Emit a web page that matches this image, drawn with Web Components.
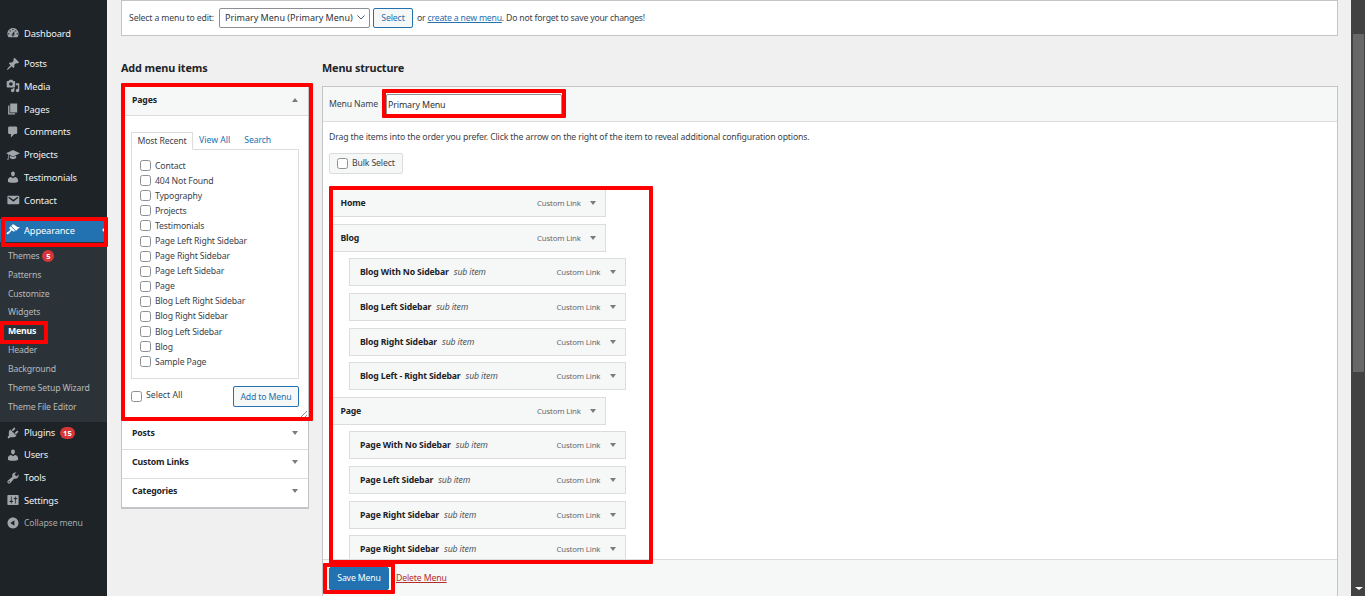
<!DOCTYPE html>
<html>
<head>
<meta charset="utf-8">
<title>Menus</title>
<style>
    html, body { margin: 0; padding: 0; height: 596px; overflow: hidden; background: #f0f0f0; }
    body { font-family: "Noto Sans", "Liberation Sans", sans-serif; font-size: 8.7px; letter-spacing: -0.14px; color: #3c434a; }
</style>
</head>
<body>
<wp-page></wp-page>

<script>
const ICONS = {
    dashboard: 'M3.76 16h12.48c1.1-1.37 1.76-3.11 1.76-5 0-4.42-3.58-8-8-8s-8 3.58-8 8c0 1.89.66 3.63 1.76 5zM10 4c.55 0 1 .45 1 1s-.45 1-1 1-1-.45-1-1 .45-1 1-1zM6 6c.55 0 1 .45 1 1s-.45 1-1 1-1-.45-1-1 .45-1 1-1zm8 0c.55 0 1 .45 1 1s-.45 1-1 1-1-.45-1-1 .45-1 1-1zm-5.37 5.55L12 7v6c0 1.1-.9 2-2 2s-2-.9-2-2c0-.57.24-1.08.63-1.45zM4 10c.55 0 1 .45 1 1s-.45 1-1 1-1-.45-1-1 .45-1 1-1zm12 0c.55 0 1 .45 1 1s-.45 1-1 1-1-.45-1-1 .45-1 1-1zm-5 3c0-.55-.45-1-1-1s-1 .45-1 1 .45 1 1 1 1-.45 1-1z',
    pin: 'M10.44 3.02l1.82-1.82 6.36 6.35-1.83 1.82c-1.05-.68-2.48-.57-3.41.36l-.75.75c-.92.93-1.04 2.35-.35 3.41l-1.83 1.82-2.41-2.41-2.8 2.79c-.42.42-3.38 2.71-3.8 2.29s1.86-3.39 2.28-3.81l2.79-2.79L4.1 9.36l1.83-1.82c1.05.69 2.48.57 3.4-.36l.75-.75c.93-.92 1.05-2.35.36-3.41z',
    media: 'M13 11V4c0-.55-.45-1-1-1h-1.67L9 1H5L3.67 3H2c-.55 0-1 .45-1 1v7c0 .55.45 1 1 1h10c.55 0 1-.45 1-1zM7 4.5c1.38 0 2.5 1.12 2.5 2.5S8.38 9.5 7 9.5 4.5 8.38 4.5 7 5.62 4.5 7 4.5zM14 6h5v10.5c0 1.38-1.12 2.5-2.5 2.5S14 17.88 14 16.5s1.12-2.5 2.5-2.5c.17 0 .34.02.5.05V9h-3V6zm-4 8.05V13h2v3.5c0 1.38-1.12 2.5-2.5 2.5S7 17.88 7 16.5 8.12 14 9.5 14c.17 0 .34.02.5.05z',
    page: 'M6 15V2h10v13H6zm-1 1h8v2H3V5h2v11z',
    comments: 'M5 2h9c1.1 0 2 .9 2 2v7c0 1.1-.9 2-2 2h-2l-5 5v-5H5c-1.1 0-2-.9-2-2V4c0-1.1.9-2 2-2z',
    learn: 'M10 3L0 7.5l3 1.4v3.6l-1.2 4.7h1.6l.6-4.4V9.4L10 12l10-4.5L10 3zM5.5 10.9v3.4c1.2 1 2.8 1.6 4.5 1.6s3.3-.6 4.5-1.6v-3.4L10 13l-4.5-2.1z',
    users: 'M10 9.25c-2.27 0-2.73-3.44-2.73-3.44C7 4.02 7.82 2 9.97 2c2.16 0 2.98 2.02 2.71 3.81 0 0-.41 3.44-2.68 3.44zm0 2.57L12.72 10c2.39 0 4.52 2.33 4.52 4.53v2.49s-3.65 1.13-7.24 1.13c-3.65 0-7.24-1.13-7.24-1.13v-2.49c0-2.25 1.94-4.48 4.47-4.48z',
    email: 'M3.87 4h13.25C18.37 4 19 4.59 19 5.79v8.42c0 1.19-.63 1.79-1.88 1.79H3.87c-1.25 0-1.88-.6-1.88-1.79V5.79c0-1.2.63-1.79 1.88-1.79zm6.62 8.6l6.74-5.53c.24-.2.43-.66.13-1.07-.29-.41-.82-.42-1.17-.17l-5.7 3.86L4.8 5.83c-.35-.25-.88-.24-1.17.17-.3.41-.11.87.13 1.07z',
    appearance: 'M14.48 11.06L7.41 3.99l1.5-1.5c.5-.56 2.3-.47 3.51.32 1.21.8 1.43 1.28 2.91 2.1 1.18.64 2.45 1.26 4.45.85zm-.71.71L6.7 4.7 4.93 6.47c-.39.39-.39 1.02 0 1.41l1.06 1.06c.39.39.39 1.03 0 1.42-.6.6-1.43 1.11-2.21 1.69-.35.26-.7.53-1.01.84C1.43 13.23.4 14.91 1.2 15.7c.79.8 2.47-.23 3.83-1.59.31-.31.58-.65.84-1 .58-.78 1.09-1.61 1.69-2.21.39-.39 1.02-.39 1.41 0l1.06 1.06c.39.39 1.02.39 1.41 0z',
    plugins: 'M13.11 4.36L9.87 7.6 8 5.73l3.24-3.24c.35-.34 1.05-.2 1.56.32.52.51.66 1.21.31 1.55zm-8 1.77l.91-1.12 9.01 9.01-1.19.84c-.71.71-2.63 1.16-3.82 1.16H6.14L4.9 17.26c-.59.59-1.54.59-2.12 0-.59-.58-.59-1.53 0-2.12l1.24-1.24v-3.88c0-1.13.4-3.19 1.09-3.89zm7.26 3.97l3.24-3.24c.34-.35 1.04-.21 1.55.31.52.51.66 1.21.31 1.55l-3.24 3.25z',
    tools: 'M16.68 9.77c-1.34 1.34-3.3 1.67-4.95.99l-5.41 6.52c-.99.99-2.59.99-3.58 0s-.99-2.59 0-3.57l6.52-5.42c-.68-1.65-.35-3.61.99-4.95 1.28-1.28 3.12-1.62 4.72-1.06l-2.89 2.89 2.82 2.82 2.86-2.87c.53 1.58.18 3.39-1.08 4.67zM3.81 16.21c.4.39 1.04.39 1.43 0 .4-.4.4-1.04 0-1.43-.39-.4-1.03-.4-1.43 0-.39.39-.39 1.03 0 1.43z',
    settings: 'M18 16V4c0-.55-.45-1-1-1H3c-.55 0-1 .45-1 1v12c0 .55.45 1 1 1h14c.55 0 1-.45 1-1zM8 11h1c.55 0 1 .45 1 1s-.45 1-1 1H8v1.5c0 .28-.22.5-.5.5s-.5-.22-.5-.5V13H6c-.55 0-1-.45-1-1s.45-1 1-1h1V5.5c0-.28.22-.5.5-.5s.5.22.5.5V11zm5-2h-1c-.55 0-1-.45-1-1s.45-1 1-1h1V5.5c0-.28.22-.5.5-.5s.5.22.5.5V7h1c.55 0 1 .45 1 1s-.45 1-1 1h-1v5.5c0 .28-.22.5-.5.5s-.5-.22-.5-.5V9z',
    collapse: 'M10 2.16c4.33 0 7.84 3.51 7.84 7.84s-3.51 7.84-7.84 7.84S2.16 14.33 2.16 10 5.71 2.16 10 2.16zm2 11.72V6.12L6.18 9.97z'
};

class WpPage extends HTMLElement {
    constructor() {
        super();
        this.attachShadow({ mode: 'open' });
    }
    connectedCallback() {
        this.shadowRoot.innerHTML = `
            <style>
                :host { display: flex; position: relative; width: 1365px; height: 596px; overflow: hidden; }
                .main { flex: 1; min-width: 0; padding: 0 13px 0 14px; display: flex; flex-direction: column; }
                .cols { display: grid; grid-template-columns: 188px 1016px; gap: 13px; padding-top: 25px; flex: 1; min-height: 0; }
                .col { display: flex; flex-direction: column; min-height: 0; }
                h2 { margin: 0; font-size: 10.85px; line-height: 14px; font-weight: 700; color: #1d2327; height: 25px; }
                h2.right { height: 26px; }
            </style>
            <wp-sidebar></wp-sidebar>
            <div class="main">
                <select-bar></select-bar>
                <div class="cols">
                    <div class="col">
                        <h2>Add menu items</h2>
                        <items-panel></items-panel>
                    </div>
                    <div class="col">
                        <h2 class="right">Menu structure</h2>
                        <structure-panel></structure-panel>
                    </div>
                </div>
            </div>
            <fake-scrollbar></fake-scrollbar>
            <red-mark x="1" y="217" w="107" h="30"></red-mark>
            <red-mark x="0" y="321" w="48" h="23"></red-mark>
            <red-mark x="121" y="83" w="192" h="338"></red-mark>
            <red-mark x="382" y="89" w="184" h="29"></red-mark>
            <red-mark x="329" y="186" w="324" h="378"></red-mark>
            <red-mark x="323" y="563" w="72" h="31"></red-mark>
        `;
    }
}

class RedMark extends HTMLElement {
    constructor() {
        super();
        this.attachShadow({ mode: 'open' });
    }
    connectedCallback() {
        const a = (n) => this.getAttribute(n);
        this.shadowRoot.innerHTML = `
            <style>
                :host {
                    position: absolute; box-sizing: border-box; pointer-events: none;
                    left: ${a('x')}px; top: ${a('y')}px; width: ${a('w')}px; height: ${a('h')}px;
                    border: 4px solid #f00; border-radius: 1px;
                }
            </style>
        `;
    }
}

class FakeScrollbar extends HTMLElement {
    constructor() {
        super();
        this.attachShadow({ mode: 'open' });
    }
    connectedCallback() {
        this.shadowRoot.innerHTML = `
            <style>
                :host { display: flex; flex-direction: column; flex: none; width: 14px; height: 596px; background: #424242; box-sizing: border-box; padding: 34px 1px 0 2px; }
                .thumb { height: 338px; background: #686868; }
                .arrow { margin: auto 0 6px 2px; width: 0; height: 0; border-left: 4px solid transparent; border-right: 4px solid transparent; border-top: 3px solid #fff; }
            </style>
            <div class="thumb"></div>
            <div class="arrow"></div>
        `;
    }
}

class WpSidebar extends HTMLElement {
    constructor() {
        super();
        this.attachShadow({ mode: 'open' });
    }
    item(icon, label, extra = '', cls = '') {
        return `<a class="item ${icon === 'appearance' ? 'current' : ''} ${cls}">
            <svg viewBox="0 0 20 20" width="14" height="14"><path d="${ICONS[icon]}"/></svg>
            <span>${label}</span>${extra}
        </a>`;
    }
    connectedCallback() {
        const subs = ['Patterns', 'Customize', 'Widgets', 'Menus', 'Header', 'Background', 'Theme Setup Wizard', 'Theme File Editor'];
        this.shadowRoot.innerHTML = `
            <style>
                :host { display: flex; flex-direction: column; flex: none; width: 107px; height: 596px; box-sizing: border-box; padding-top: 22px; background: #1d2327; font-size: 9.3px; color: #f0f0f1; }
                .item { display: flex; align-items: center; flex: none; height: 22.75px; padding-left: 6px; gap: 4px; position: relative; }
                .item svg { fill: #a0a5aa; flex: none; }
                .sep { height: 7.4px; flex: none; }
                .current { background: #2271b1; color: #fff; }
                .current svg { fill: #fff; }
                .current::after { content: ''; position: absolute; right: 0; top: 6px; border: 5px solid transparent; border-right-color: #f0f0f1; border-left: 0; }
                .sub { background: #2c3338; padding: 5px 0 5.4px; color: #b4b9be; font-size: 8.7px; }
                .sub div { display: flex; align-items: center; gap: 3px; height: 18.85px; padding-left: 8px; }
                .sub .on { color: #fff; font-weight: 700; }
                .badge { display: inline-flex; align-items: center; justify-content: center; min-width: 12px; height: 12px; padding: 0 3px; box-sizing: border-box; border-radius: 6px; background: #d63638; color: #fff; font-size: 7.5px; font-weight: 700; letter-spacing: 0; }
                .plugins { height: 22px; }
                .plugins .badge { margin-left: 1px; }
                .collapse { color: #a7aaad; font-size: 8.7px; margin-top: -0.5px; }
            </style>
            ${this.item('dashboard', 'Dashboard')}
            <div class="sep"></div>
            ${this.item('pin', 'Posts')}
            ${this.item('media', 'Media')}
            ${this.item('page', 'Pages')}
            ${this.item('comments', 'Comments')}
            ${this.item('learn', 'Projects')}
            ${this.item('users', 'Testimonials')}
            ${this.item('email', 'Contact')}
            <div class="sep"></div>
            ${this.item('appearance', 'Appearance')}
            <div class="sub">
                <div>Themes <span class="badge">5</span></div>
                ${subs.map((s) => `<div class="${s === 'Menus' ? 'on' : ''}">${s}</div>`).join('')}
            </div>
            ${this.item('plugins', 'Plugins', '<span class="badge">15</span>', 'plugins')}
            ${this.item('users', 'Users')}
            ${this.item('tools', 'Tools')}
            ${this.item('settings', 'Settings')}
            <a class="item collapse">
                <svg viewBox="0 0 20 20" width="14" height="14"><path d="${ICONS.collapse}"/></svg>
                <span>Collapse menu</span>
            </a>
        `;
    }
}

class SelectBar extends HTMLElement {
    constructor() {
        super();
        this.attachShadow({ mode: 'open' });
    }
    connectedCallback() {
        this.shadowRoot.innerHTML = `
            <style>
                :host { display: flex; align-items: center; flex: none; box-sizing: border-box; width: 1217px; height: 36px; padding: 0 7px 1px; background: #fff; border: 1px solid #c3c4c7; white-space: nowrap; }
                .label { width: 90px; }
                .select { box-sizing: border-box; display: flex; align-items: center; justify-content: space-between; width: 151px; height: 20px; padding: 0 4px 0 5px; background: #fff; border: 1px solid #8c8f94; border-radius: 2px; color: #2c3338; font-size: 9px; letter-spacing: 0; }
                .btn { box-sizing: border-box; display: flex; align-items: center; justify-content: center; width: 40px; height: 20px; margin: 0 4px 0 3px; color: #2271b1; background: #f6f7f7; border: 1px solid #2271b1; border-radius: 2px; }
                .note { letter-spacing: -0.2px; }
                a { color: #2271b1; text-decoration: underline; }
                svg { fill: none; stroke: #50575e; stroke-width: 1; }
            </style>
            <span class="label">Select a menu to edit:</span>
            <span class="select">Primary Menu (Primary Menu)<svg width="8" height="5" viewBox="0 0 8 5"><path d="M.5.5L4 4 7.5.5"/></svg></span>
            <span class="btn">Select</span>
            <span class="note">or <a>create a new menu</a>. Do not forget to save your changes!</span>
        `;
    }
}

class ItemsPanel extends HTMLElement {
    constructor() {
        super();
        this.attachShadow({ mode: 'open' });
    }
    connectedCallback() {
        const pages = ['Contact', '404 Not Found', 'Typography', 'Projects', 'Testimonials', 'Page Left Right Sidebar', 'Page Right Sidebar', 'Page Left Sidebar', 'Page', 'Blog Left Right Sidebar', 'Blog Right Sidebar', 'Blog Left Sidebar', 'Blog', 'Sample Page'];
        this.shadowRoot.innerHTML = `
            <style>
                :host { display: block; flex: none; box-sizing: border-box; width: 188px; background: #fff; border: 1px solid #c3c4c7; border-bottom-width: 2px; }
                .head { display: flex; align-items: center; justify-content: space-between; padding: 0 10px; font-weight: 700; color: #1d2327; }
                .tri { width: 0; height: 0; border-left: 3px solid transparent; border-right: 3px solid transparent; border-top: 4px solid #787c82; }
                .tri.up { border-top: 0; border-bottom: 4px solid #787c82; }
                .pages { height: 29px; padding-bottom: 2px; background: #f6f7f7; border-bottom: 1px solid #dcdcde; box-sizing: border-box; }
                .body { height: 304px; box-sizing: border-box; padding: 16px 9px 0; position: relative; }
                .tabs { display: flex; align-items: flex-end; height: 17px; }
                .tabs span { color: #2271b1; }
                .tabs .active { box-sizing: border-box; width: 62px; height: 18px; margin-bottom: -1px; display: flex; align-items: center; justify-content: center; color: #3c434a; border: 1px solid #dcdcde; border-bottom-color: #fff; position: relative; }
                .tabs .v { margin: 0 14px 0 6px; line-height: 17px; letter-spacing: 0; }
                .tabs .s { line-height: 17px; }
                .list { box-sizing: border-box; width: 168px; height: 230px; border: 1px solid #dcdcde; padding: 8px 8px 0; }
                .row { display: flex; align-items: center; gap: 4px; height: 15.1px; }
                input { appearance: none; margin: 0; box-sizing: border-box; width: 11px; height: 11px; background: #fff; border: 1px solid #8c8f94; border-radius: 2.5px; flex: none; }
                .foot { display: flex; justify-content: space-between; align-items: center; margin-top: 7px; }
                .all { display: flex; align-items: center; gap: 4px; letter-spacing: 0; }
                .all span { margin-bottom: 3px; }
                .add { box-sizing: border-box; display: flex; align-items: center; justify-content: center; width: 66px; height: 21px; color: #2271b1; background: #f6f7f7; border: 1px solid #2271b1; border-radius: 2px; }
                .grip { position: absolute; right: 1px; bottom: 1px; }
                .closed { height: 29px; padding-bottom: 4px; box-sizing: border-box; border-top: 1px solid #dcdcde; }
                .closed.first { border-top: 0; height: 29.3px; }
            </style>
            <div class="head pages"><span>Pages</span><span class="tri up"></span></div>
            <div class="body">
                <div class="tabs"><span class="active">Most Recent</span><span class="v">View All</span><span class="s">Search</span></div>
                <div class="list">
                    ${pages.map((p) => `<div class="row"><input type="checkbox"><span>${p}</span></div>`).join('')}
                </div>
                <div class="foot">
                    <span class="all"><input type="checkbox"><span>Select All</span></span>
                    <span class="add">Add to Menu</span>
                </div>
                <svg class="grip" width="8" height="8" viewBox="0 0 8 8" fill="none" stroke="#8c8f94" stroke-width="1"><path d="M0 8L8 0M4 8L8 4"/></svg>
            </div>
            <div class="head closed first"><span>Posts</span><span class="tri"></span></div>
            <div class="head closed"><span>Custom Links</span><span class="tri"></span></div>
            <div class="head closed"><span>Categories</span><span class="tri"></span></div>
        `;
    }
}

class MenuRow extends HTMLElement {
    constructor() {
        super();
        this.attachShadow({ mode: 'open' });
    }
    connectedCallback() {
        const sub = this.hasAttribute('sub');
        this.shadowRoot.innerHTML = `
            <style>
                :host { display: flex; align-items: center; flex: none; box-sizing: border-box; width: 276.4px; height: 28px; padding: 0 9.7px; background: #f6f7f7; border: 1px solid #dcdcde; margin-left: ${sub ? '19.6px' : '0'}; }
                b { color: #1d2327; font-weight: 700; }
                i { margin-left: 5px; color: #50575e; }
                .type { margin-left: auto; color: #646970; font-size: 7.8px; }
                .tri { margin: 0 -1px 0 9.6px; width: 0; height: 0; border-left: 3px solid transparent; border-right: 3px solid transparent; border-top: 4px solid #787c82; }
            </style>
            <b><slot></slot></b>
            ${sub ? '<i>sub item</i>' : ''}
            <span class="type">Custom Link</span>
            <span class="tri"></span>
        `;
    }
}

class StructurePanel extends HTMLElement {
    constructor() {
        super();
        this.attachShadow({ mode: 'open' });
    }
    connectedCallback() {
        this.shadowRoot.innerHTML = `
            <style>
                :host { display: flex; flex-direction: column; flex: none; box-sizing: border-box; width: 1016px; height: 510px; background: #fff; border: 1px solid #c3c4c7; border-bottom: 0; }
                .head { display: flex; align-items: center; flex: none; box-sizing: border-box; height: 35px; padding: 0 6px; gap: 6px; background: #f6f7f7; border-bottom: 1px solid #dcdcde; }
                .head > span:first-child { width: 51px; }
                .name { box-sizing: border-box; width: 176px; height: 21px; display: flex; align-items: center; padding-left: 1px; background: #fff; border: 1px solid #8c8f94; border-radius: 2px; color: #2c3338; font-size: 8.9px; }
                .body { flex: 1; min-height: 0; overflow: hidden; padding: 0 6px; }
                p { margin: 8.5px 0 0; line-height: 13px; }
                .bulk { display: flex; align-items: center; gap: 4px; box-sizing: border-box; width: 74px; height: 21px; margin-top: 9px; padding-left: 7px; background: #f6f7f7; border: 1px solid #dcdcde; border-radius: 2px; }
                input { appearance: none; margin: 0; box-sizing: border-box; width: 11px; height: 11px; background: #fff; border: 1px solid #8c8f94; border-radius: 2.5px; }
                .items { display: flex; flex-direction: column; gap: 6.67px; margin-top: 15.4px; padding-left: 0.7px; }
                .foot { display: flex; align-items: center; flex: none; box-sizing: border-box; height: 37px; padding: 0 6px; gap: 7px; background: #f6f7f7; border-top: 1px solid #dcdcde; }
                .save { box-sizing: border-box; display: flex; align-items: center; justify-content: center; width: 60px; height: 23px; color: #fff; background: #2271b1; border: 1px solid #2271b1; border-radius: 2px; }
                a { color: #b32d2e; text-decoration: underline; }
            </style>
            <div class="head"><span>Menu Name</span><span class="name">Primary Menu</span></div>
            <div class="body">
                <p>Drag the items into the order you prefer. Click the arrow on the right of the item to reveal additional configuration options.</p>
                <div class="bulk"><input type="checkbox"><span>Bulk Select</span></div>
                <div class="items">
                    <menu-row>Home</menu-row>
                    <menu-row>Blog</menu-row>
                    <menu-row sub>Blog With No Sidebar</menu-row>
                    <menu-row sub>Blog Left Sidebar</menu-row>
                    <menu-row sub>Blog Right Sidebar</menu-row>
                    <menu-row sub>Blog Left - Right Sidebar</menu-row>
                    <menu-row>Page</menu-row>
                    <menu-row sub>Page With No Sidebar</menu-row>
                    <menu-row sub>Page Left Sidebar</menu-row>
                    <menu-row sub>Page Right Sidebar</menu-row>
                    <menu-row sub>Page Right Sidebar</menu-row>
                </div>
            </div>
            <div class="foot"><span class="save">Save Menu</span><a>Delete Menu</a></div>
        `;
    }
}

customElements.define('red-mark', RedMark);
customElements.define('fake-scrollbar', FakeScrollbar);
customElements.define('wp-sidebar', WpSidebar);
customElements.define('select-bar', SelectBar);
customElements.define('items-panel', ItemsPanel);
customElements.define('menu-row', MenuRow);
customElements.define('structure-panel', StructurePanel);
customElements.define('wp-page', WpPage);
</script>
</body>
</html>
